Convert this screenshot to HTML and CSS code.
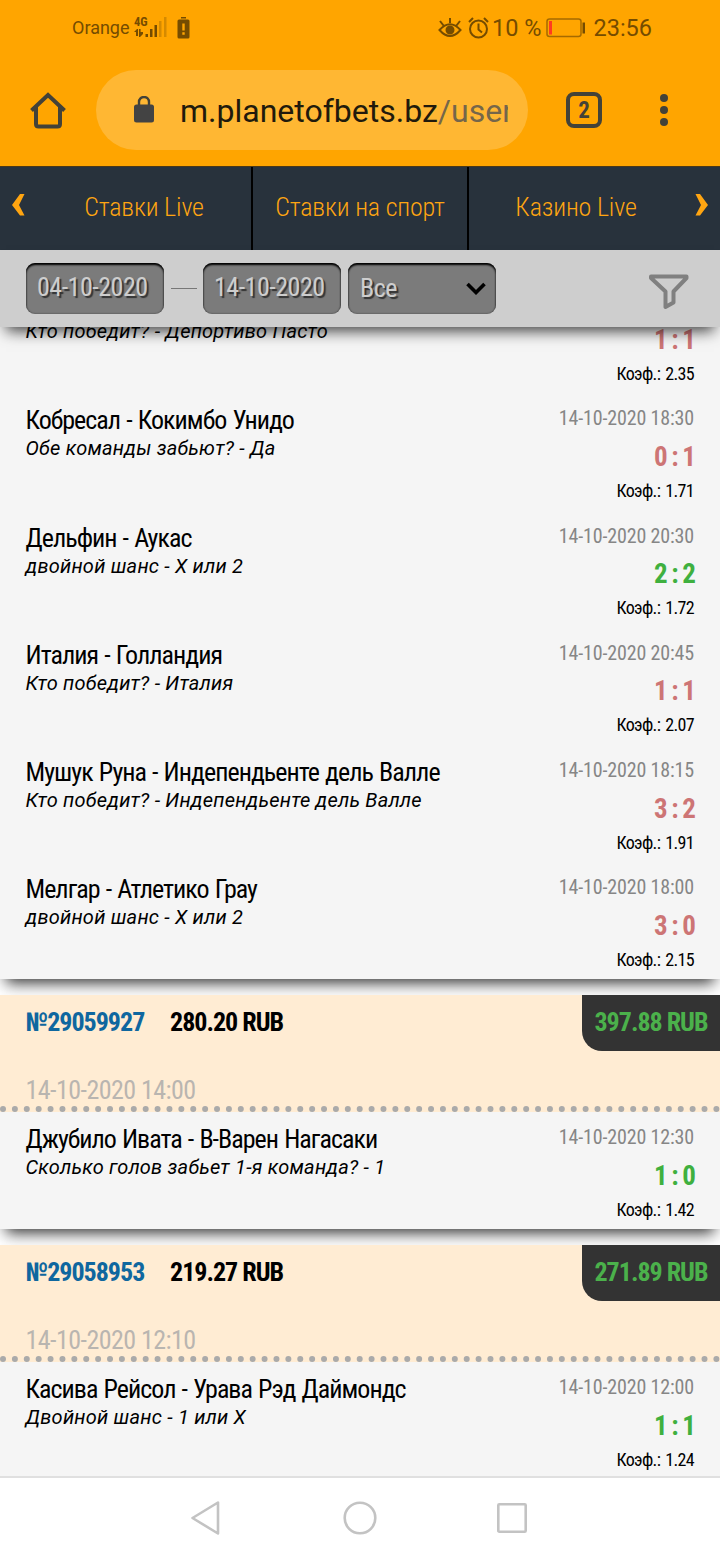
FILE: index.html
```html
<!DOCTYPE html>
<html lang="ru">
	<head>
		<title>История ставок</title>
		<meta charset="UTF-8">
		<link rel="stylesheet" href="styles.css">
	</head>

	<body>
		<div class="status">
			<span class="operator">Orange</span>
			<div class="signal">
				<span class="net">4G</span>
				<svg width="34" height="22" viewBox="0 0 34 22">
					<path class="dark" d="M0 15l3-3h1v7H2v-4zM5 12h1.600v3h2.400v2l-3 3h-1z"/>
					<path class="dark" d="M11.500 17h2.500v3h-2.500zM16 12h2.500v8H16zM20.500 8H23v12h-2.500z"/>
					<path class="pale" d="M25 4h2.500v16H25zM30 0h2.500v20H30z"/>
				</svg>
			</div>
			<svg class="sim" width="13" height="22" viewBox="0 0 13 22">
				<path d="M4 0h5v1.500H4z"/>
				<rect x="0.500" y="2.500" width="12" height="19" rx="1.500"/>
				<path class="hole" d="M5.300 6.500h2.400v7H5.300zM5.300 15.300h2.400v2.400H5.300z"/>
			</svg>
			<div class="status_right">
				<svg class="eye" width="24" height="22" viewBox="0 0 24 22">
					<path d="M1.500 13Q12 1.500 22.500 13Q12 25 1.500 13zM2 4l3.500 4.500M12 1v5M22 4l-3.500 4.500"/>
					<circle cx="12" cy="13" r="3.500"/>
				</svg>
				<svg class="alarm" width="21" height="22" viewBox="0 0 21 22">
					<circle cx="10.500" cy="12" r="8.500"/>
					<path d="M10.500 6.500v6l3.500 3M1 5l4-4M20 5l-4-4"/>
				</svg>
				<span class="percent">10 %</span>
				<svg class="battery" width="40" height="20" viewBox="0 0 40 20">
					<rect class="case" x="1" y="1" width="34" height="17.500" rx="2.500"/>
					<path class="low" d="M3 3h3v13.500H3z"/>
					<path class="tip" d="M36.500 4.500h2.500v11h-2.500z"/>
				</svg>
				<span class="time">23:56</span>
			</div>
		</div>

		<div class="browser">
			<svg class="home" width="38" height="38" viewBox="0 0 38 38">
				<path d="M2.500 19.500L19 4L35.500 19.500M7 16v17q0 2.500 2.500 2.500h19q2.500 0 2.500-2.500V16"/>
			</svg>
			<div class="address">
				<svg width="20" height="27" viewBox="0 0 20 27">
					<path class="shackle" d="M5 10V6a5 5 0 0 1 10 0v4"/>
					<rect x="0" y="8.500" width="20" height="18" rx="2.500"/>
				</svg>
				<div class="url">m.planetofbets.bz<span>/user</span></div>
			</div>
			<div class="tabs">2</div>
			<div class="dots"><i></i><i></i><i></i></div>
		</div>

		<div class="menu">
			<svg class="prev" width="14" height="22" viewBox="0 0 14 22"><path d="M8 0h4.500L7 11l5.500 10.500H8L0 11z"/></svg>
			<a class="menu_item">Ставки Live</a>
			<a class="menu_item">Ставки на спорт</a>
			<a class="menu_item">Казино Live</a>
			<svg class="next" width="14" height="22" viewBox="0 0 14 22"><path d="M6 0H1.500L7 11L1.500 21.500H6L14 11z"/></svg>
		</div>

		<div class="filter">
			<div class="field">04-10-2020</div>
			<div class="dash"></div>
			<div class="field">14-10-2020</div>
			<div class="field select">
				Все
				<svg width="20" height="13" viewBox="0 0 20 13"><path d="M1.500 2L10 10.500L18.500 2"/></svg>
			</div>
			<svg class="funnel" width="40" height="36" viewBox="0 0 40 36">
				<path d="M2 2.500H37.500V4L24.500 17.500V28.500L16.500 33V17.500L2 4z"/>
			</svg>
		</div>

		<div class="bets">
			<div class="bet first">
				<div class="event cut">
					<div class="info"><div class="pick">Кто победит? - Депортиво Пасто</div></div>
					<div class="result"><div class="score lose">1 : 1</div><div class="coef">Коэф.: 2.35</div></div>
				</div>
				<div class="event">
					<div class="info"><div class="name">Кобресал - Кокимбо Унидо</div><div class="pick">Обе команды забьют? - Да</div></div>
					<div class="result"><div class="date">14-10-2020 18:30</div><div class="score lose">0 : 1</div><div class="coef">Коэф.: 1.71</div></div>
				</div>
				<div class="event">
					<div class="info"><div class="name">Дельфин - Аукас</div><div class="pick">двойной шанс - X или 2</div></div>
					<div class="result"><div class="date">14-10-2020 20:30</div><div class="score win">2 : 2</div><div class="coef">Коэф.: 1.72</div></div>
				</div>
				<div class="event">
					<div class="info"><div class="name">Италия - Голландия</div><div class="pick">Кто победит? - Италия</div></div>
					<div class="result"><div class="date">14-10-2020 20:45</div><div class="score lose">1 : 1</div><div class="coef">Коэф.: 2.07</div></div>
				</div>
				<div class="event">
					<div class="info"><div class="name">Мушук Руна - Индепендьенте дель Валле</div><div class="pick">Кто победит? - Индепендьенте дель Валле</div></div>
					<div class="result"><div class="date">14-10-2020 18:15</div><div class="score lose">3 : 2</div><div class="coef">Коэф.: 1.91</div></div>
				</div>
				<div class="event">
					<div class="info"><div class="name">Мелгар - Атлетико Грау</div><div class="pick">двойной шанс - X или 2</div></div>
					<div class="result"><div class="date">14-10-2020 18:00</div><div class="score lose">3 : 0</div><div class="coef">Коэф.: 2.15</div></div>
				</div>
			</div>

			<div class="bet">
				<div class="bet_head">
					<div class="bet_row">
						<span class="number">№29059927</span>
						<span class="sum">280.20 RUB</span>
						<span class="prize">397.88 RUB</span>
					</div>
					<div class="bet_date">14-10-2020 14:00</div>
				</div>
				<div class="event">
					<div class="info"><div class="name">Джубило Ивата - В-Варен Нагасаки</div><div class="pick">Сколько голов забьет 1-я команда? - 1</div></div>
					<div class="result"><div class="date">14-10-2020 12:30</div><div class="score win">1 : 0</div><div class="coef">Коэф.: 1.42</div></div>
				</div>
			</div>

			<div class="bet">
				<div class="bet_head">
					<div class="bet_row">
						<span class="number">№29058953</span>
						<span class="sum">219.27 RUB</span>
						<span class="prize">271.89 RUB</span>
					</div>
					<div class="bet_date">14-10-2020 12:10</div>
				</div>
				<div class="event">
					<div class="info"><div class="name">Касива Рейсол - Урава Рэд Даймондс</div><div class="pick">Двойной шанс - 1 или X</div></div>
					<div class="result"><div class="date">14-10-2020 12:00</div><div class="score win">1 : 1</div><div class="coef">Коэф.: 1.24</div></div>
				</div>
			</div>
		</div>

		<div class="navbar">
			<svg width="34" height="36" viewBox="0 0 34 36"><path d="M27 2.500v31L1.500 18z"/></svg>
			<svg width="34" height="36" viewBox="0 0 34 36"><circle cx="17" cy="18" r="15.300"/></svg>
			<svg width="34" height="36" viewBox="0 0 34 36"><rect x="3.300" y="4.300" width="27.400" height="27.400" rx="1"/></svg>
		</div>
	</body>
</html>
```

FILE: styles.css
```css
*
	{
		box-sizing: border-box;
	}
body
	{
		margin: 0;
		width: 720px;
		height: 1560px;
		overflow: hidden;
		display: flex;
		flex-direction: column;
		font-family: "Roboto Condensed", Roboto, sans-serif;
		font-stretch: 75%;
		background: #fff;
	}
svg
	{
		flex: none;
		fill: none;
	}

/* статус-бар */
.status
	{
		flex: none;
		height: 55px;
		padding: 1px 68px 0 72px;
		display: flex;
		align-items: center;
		background: #ffa500;
		color: #754c00;
		font-family: Roboto, sans-serif;
		font-stretch: 100%;
	}
.operator
	{
		width: 62px;
		margin-top: -1px;
		font-size: 18px;
		font-weight: 370;
	}
.signal
	{
		position: relative;
		height: 22px;
	}
.signal .net
	{
		position: absolute;
		left: 0;
		top: 0;
		font-size: 12.500px;
		line-height: 10px;
		font-weight: bold;
		font-stretch: 75%;
	}
.dark, .sim
	{
		fill: #754c00;
	}
.pale
	{
		fill: #d58a00;
	}
.sim
	{
		margin-left: 9px;
	}
.hole
	{
		fill: #ffa500;
	}
.status_right
	{
		margin-left: auto;
		display: flex;
		align-items: center;
		font-size: 23.500px;
		font-weight: 370;
	}
.eye, .alarm
	{
		stroke: #754c00;
		stroke-width: 2;
	}
.eye circle
	{
		fill: #754c00;
	}
.alarm
	{
		margin: 0 3px 0 6px;
	}
.battery
	{
		margin: 0 7px 0 5px;
	}
.case
	{
		stroke: #a56a00;
		stroke-width: 1.5;
	}
.low
	{
		fill: #ff3b20;
	}
.tip
	{
		fill: #754c00;
	}

/* строка браузера */
.browser
	{
		flex: none;
		height: 111px;
		padding: 0 50px 2px 29px;
		display: flex;
		align-items: center;
		background: #ffa500;
		font-family: Roboto, sans-serif;
		font-stretch: 100%;
	}
.home
	{
		stroke: #434238;
		stroke-width: 4;
	}
.address
	{
		width: 432px;
		height: 80px;
		margin: 0 38px 0 29px;
		padding: 0 20px 0 38px;
		display: flex;
		align-items: center;
		border-radius: 40px;
		background: #ffb733;
	}
.address svg
	{
		fill: #434343;
	}
.address .shackle
	{
		fill: none;
		stroke: #434238;
		stroke-width: 2.4;
	}
.url
	{
		margin-left: 26px;
		margin-top: 2px;
		width: 328px;
		overflow: hidden;
		white-space: nowrap;
		font-size: 32px;
		color: #211a0c;
	}
.url span
	{
		color: #75664a;
	}
.tabs
	{
		width: 36px;
		height: 36px;
		border: 4px solid #434238;
		border-radius: 8px;
		text-align: center;
		font-size: 23px;
		line-height: 29px;
		font-weight: bold;
		font-stretch: 75%;
		color: #434238;
	}
.dots
	{
		margin-left: auto;
		margin-right: 2px;
		display: flex;
		flex-direction: column;
		gap: 4px;
	}
.dots i
	{
		width: 8px;
		height: 8px;
		border-radius: 50%;
		background: #434238;
	}

/* меню */
.menu
	{
		flex: none;
		position: relative;
		height: 84px;
		display: flex;
		background: #28323c;
		border-top: 1px solid #4a3818;
	}
.menu_item
	{
		width: 216px;
		border-right: 2px solid #000;
		text-align: center;
		font-size: 26px;
		letter-spacing: -.15px;
		line-height: 81px;
		font-weight: 300;
		color: #ffa511;
	}
.menu_item:nth-of-type(1)
	{
		width: 253px;
		padding-left: 37px;
	}
.menu_item:nth-of-type(3)
	{
		border: 0;
		padding-right: 2px;
	}
.prev, .next
	{
		position: absolute;
		top: 27px;
		fill: #ffa511;
	}
.prev
	{
		left: 12px;
	}
.next
	{
		right: 12px;
	}

/* фильтр */
.filter
	{
		flex: none;
		position: relative;
		z-index: 2;
		height: 77px;
		padding: 0 31px 0 26px;
		display: flex;
		align-items: center;
		background: #cecece;
		box-shadow: 0 10px 14px -6px rgba(0,0,0,.75);
	}
.field
	{
		width: 138px;
		height: 51px;
		padding-left: 11px;
		border-radius: 9px;
		background: #7b7b7b;
		box-shadow: inset 0 2px 2px #000, inset 0 0 2px rgba(0,0,0,.5);
		font-size: 26px;
		letter-spacing: -.5px;
		line-height: 49px;
		color: #cecece;
		text-shadow: 2px 2px 1px #333;
	}
.dash
	{
		width: 26px;
		height: 1px;
		margin: 0 6px 0 7px;
		background: #777;
	}
.select
	{
		width: 148px;
		margin-left: 7px;
		padding: 0 10px 1px 12px;
		display: flex;
		align-items: center;
		justify-content: space-between;
		line-height: 47px;
	}
.select svg
	{
		stroke: #000;
		stroke-width: 3.6;
	}
.funnel
	{
		margin-left: auto;
		margin-top: 6px;
		stroke: #808080;
		stroke-width: 4;
		stroke-linejoin: round;
	}

/* список ставок */
.bets
	{
		flex: 1;
		min-height: 0;
		overflow: hidden;
	}
.bet
	{
		margin-bottom: 16px;
		background: #f5f5f5;
		box-shadow: 0 10px 14px -6px rgba(0,0,0,.8);
	}
.bet.first
	{
		display: flow-root;
		margin-bottom: 15.800px;
	}
.bet_head
	{
		height: 117px;
		border-bottom: 6px dotted #aaa;
		background: #ffecd3;
	}
.bet_row
	{
		display: flex;
		padding-left: 25.500px;
		height: 56px;
		font-size: 26px;
		letter-spacing: -1px;
		line-height: 54px;
		font-weight: bold;
	}
.number
	{
		width: 144.500px;
		color: #0f679f;
	}
.prize
	{
		margin-left: auto;
		width: 138px;
		text-align: center;
		border-bottom-left-radius: 20px;
		background: #333;
		color: #4bb14b;
	}
.bet_date
	{
		padding: 24px 0 0 25.500px;
		font-size: 26px;
		letter-spacing: -.55px;
		line-height: 30px;
		color: #b9b5b0;
	}
.event
	{
		height: 117.200px;
		padding: 0 26px 0 25.500px;
		display: flex;
		justify-content: space-between;
		white-space: nowrap;
	}
.name
	{
		padding-top: 12px;
		font-size: 26px;
		letter-spacing: -.98px;
		word-spacing: 1.100px;
		line-height: 30px;
	}
.pick
	{
		font-family: Roboto, sans-serif;
		font-stretch: 100%;
		font-size: 20px;
		letter-spacing: .22px;
		line-height: 26px;
		font-style: italic;
	}
.result
	{
		text-align: right;
	}
.date
	{
		padding-top: 13px;
		font-size: 20px;
		letter-spacing: -.15px;
		line-height: 24px;
		color: #868686;
	}
.score
	{
		margin-right: -1px;
		font-size: 27px;
		letter-spacing: -1px;
		word-spacing: -.500px;
		line-height: 32px;
		padding-top: 10.600px;
		font-weight: bold;
	}
.lose
	{
		color: #cd7575;
	}
.win
	{
		color: #3fb03f;
	}
.coef
	{
		padding-top: 7px;
		font-size: 18px;
		letter-spacing: -.65px;
		word-spacing: 1.500px;
		line-height: 22px;
	}
/* верхняя ставка заходит под фильтр */
.event.cut
	{
		height: 66.400px;
	}
.cut .pick
	{
		margin-top: -9px;
	}
.cut .score
	{
		margin-top: -3.400px;
		padding-top: 0;
	}

/* кнопки андроида */
.navbar
	{
		flex: none;
		position: relative;
		z-index: 2;
		height: 84px;
		padding-bottom: 2px;
		display: flex;
		justify-content: center;
		align-items: center;
		gap: 118px;
		border-top: 2px solid #e0e0e0;
		background: #fff;
		stroke: #c3c3c3;
		stroke-width: 2.6;
		stroke-linejoin: round;
	}
```
